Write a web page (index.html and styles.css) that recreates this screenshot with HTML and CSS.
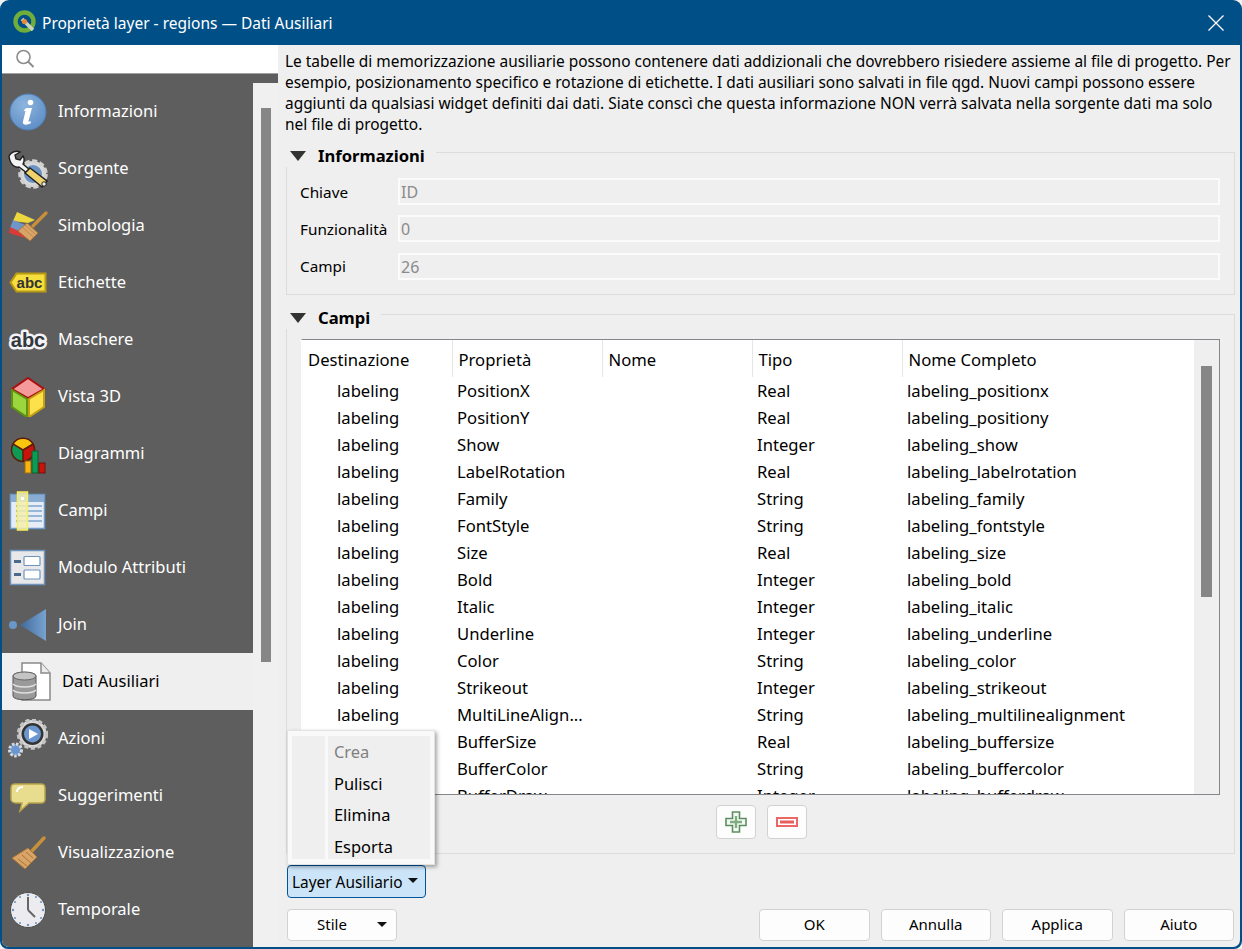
FILE: index.html
```html
<!DOCTYPE html>
<html lang="it">
<head>
<meta charset="utf-8">
<title>Proprietà layer - regions — Dati Ausiliari</title>
<link rel="stylesheet" href="styles.css">
</head>
<body>
<div class="window">
  <header class="titlebar">
    <svg class="logo" viewBox="0 0 26 26" width="26" height="26">
      <circle cx="12.5" cy="11.5" r="9" fill="none" stroke="#6fae3c" stroke-width="4.4"/>
      <path d="M10 9l11 11" stroke="#c9d4c0" stroke-width="3.6" fill="none"/>
      <circle cx="12.5" cy="11.5" r="2.6" fill="#e8893a"/>
    </svg>
    <span class="title">Proprietà layer - regions — Dati Ausiliari</span>
    <svg class="close" viewBox="0 0 16 16" width="16" height="16"><path d="M.5.5l15 15M15.500.5l-15 15" stroke="#fff" stroke-width="1.300" fill="none"/></svg>
  </header>
  <div class="content">
    <aside class="left">
      <div class="search">
        <svg viewBox="0 0 20 20" width="20" height="20"><circle cx="8.500" cy="8" r="6.500" fill="none" stroke="#8c8c8c" stroke-width="1.600"/><path d="M13 12.500l5.500 5.500" stroke="#8c8c8c" stroke-width="2"/></svg>
      </div>
      <div class="side-row">
        <nav class="side-list">
          <div class="item"><svg class="ico" viewBox="0 0 40 40"><defs><radialGradient id="gi" cx=".4" cy=".3" r=".8"><stop offset="0" stop-color="#8db4de"/><stop offset="1" stop-color="#5a8bc4"/></radialGradient></defs><circle cx="20" cy="20" r="18" fill="url(#gi)" stroke="#4f7fb8"/><circle cx="22.500" cy="10.500" r="2.800" fill="#fff"/><path d="M18 16h6l-3.500 13c-.2 1 .6 1 2.500 0l-.5 2.500c-4 2-8.500 1.500-7.500-2l2.500-10.500h-2z" fill="#fff"/></svg><span>Informazioni</span></div>
          <div class="item"><svg class="ico" viewBox="0 0 40 40"><circle cx="25" cy="25" r="13" fill="#d8d8d8" stroke="#d0d0d0" stroke-width="3.500" stroke-dasharray="5 2.500"/><circle cx="25" cy="25" r="9" fill="#6a93c4"/><path d="M1 7c2-4 7-6 11-4l-5 3 1 4 4 1 3-4c2 3 1 6 0 8l7 6-3 3-8-6c-4 1-9-2-10-11z" fill="#f4f4f4" stroke="#222" stroke-width="1.400"/><path d="M22 19l17 13-5 6-17-14z" fill="#eed36c" stroke="#222" stroke-width="1.500"/><circle cx="36" cy="35" r="2.200" fill="#eee" stroke="#222"/></svg><span>Sorgente</span></div>
          <div class="item"><svg class="ico" viewBox="0 0 40 40"><path d="M9 6l18 8-7 3-15-2z" fill="#ecd83e"/><path d="M5 14l15 6-5 7-13-5z" fill="#6f96c7"/><path d="M2 21l13 6 2 5-16-5z" fill="#d93a3a"/><path d="M38 7L25 20" stroke="#c98f3a" stroke-width="3.200" stroke-linecap="round"/><path d="M19 17l11 10-8 8-12-10z" fill="#d9a468" stroke="#a87434"/><path d="M14 21l11 10M17 19l10 9" stroke="#b88444" stroke-width=".8"/></svg><span>Simbologia</span></div>
          <div class="item"><svg class="ico" viewBox="0 0 40 40"><path d="M8.500 10.500h29v18h-29l-6-9z" fill="#f6de3c" stroke="#b89a14" stroke-width="2"/><text class="abc" x="21.500" y="24.500">abc</text></svg><span>Etichette</span></div>
          <div class="item"><svg class="ico" viewBox="0 0 40 40"><text class="abc2" x="20" y="26.500">abc</text></svg><span>Maschere</span></div>
          <div class="item"><svg class="ico" viewBox="0 0 40 40"><path d="M20 1l16 11-16 9-16-9z" fill="#f59a9a" stroke="#a80f0f" stroke-width="2"/><path d="M4 13l15 9v18l-15-10z" fill="#9bd63f" stroke="#5d9412" stroke-width="2"/><path d="M36 13l-15 9v18l15-10z" fill="#fce14a" stroke="#c4a012" stroke-width="2"/></svg><span>Vista 3D</span></div>
          <div class="item"><svg class="ico" viewBox="0 0 40 40"><circle cx="15" cy="16" r="11.500" fill="#0e9a52" stroke="#5c1c0c" stroke-width="1.500"/><path d="M15 16V27a11.500 11.500 0 0 0 10-17z" fill="#c8140a" stroke="#5c1c0c" stroke-width="1.500"/><path d="M15 16L5 10a11.500 11.500 0 0 1 20 0z" fill="#fbc70e" stroke="#5c1c0c" stroke-width="1.500"/><rect x="17" y="27" width="6" height="12" fill="#fbb40e" stroke="#9b6a10"/><rect x="24" y="17" width="6" height="22" fill="#0e9a52" stroke="#0a5f34"/><rect x="31" y="29" width="6" height="10" fill="#c8140a" stroke="#6c120a"/></svg><span>Diagrammi</span></div>
          <div class="item"><svg class="ico" viewBox="0 0 40 40"><rect x="2.500" y="3.500" width="34" height="34" fill="#e6edf6" stroke="#6e9ac8" stroke-width="1.500"/><rect x="3" y="4" width="33" height="7" fill="#88acd4"/><path d="M8 15h26M8 20h26M8 25h26M8 30h26" stroke="#7fa4cc" stroke-width="1.500"/><rect x="9.500" y="1" width="10" height="38" fill="#f4eeb0" fill-opacity=".85" stroke="#f6f05a" stroke-width="1.500"/><rect x="13" y="6" width="3" height="3" fill="#fff"/></svg><span>Campi</span></div>
          <div class="item"><svg class="ico" viewBox="0 0 40 40"><rect x="2.500" y="2.500" width="34" height="34" fill="#e8e8ea" stroke="#6e94bd" stroke-width="1.500"/><rect x="6" y="12" width="7" height="3" fill="#4a6a8c"/><rect x="6" y="25" width="7" height="3" fill="#4a6a8c"/><rect x="16" y="8.500" width="16" height="9" rx="1" fill="#fff" stroke="#6e94bd" stroke-width="1.200"/><rect x="16" y="22" width="16" height="9" rx="1" fill="#fff" stroke="#6e94bd" stroke-width="1.200"/></svg><span>Modulo Attributi</span></div>
          <div class="item"><svg class="ico" viewBox="0 0 40 40"><defs><linearGradient id="gj" x1="0" x2="1" y1="0" y2="0"><stop offset="0" stop-color="#3f6a9c"/><stop offset="1" stop-color="#78a2cf"/></linearGradient></defs><circle cx="5" cy="20" r="4" fill="#6a97c9"/><path d="M12 20l26-16v32z" fill="url(#gj)"/></svg><span>Join</span></div>
          <div class="item current"><svg class="ico" viewBox="0 0 40 40"><path d="M10 1h19l9 10v27H10z" fill="#fff" stroke="#8a8a8a" stroke-width="1.500"/><path d="M29 1v10h9" fill="#ececec" stroke="#8a8a8a" stroke-width="1.500"/><path d="M1 14c0-5 23-5 23 0v20c0 5-23 5-23 0z" fill="#9a9a9a" stroke="#555"/><ellipse cx="12.500" cy="14" rx="11.500" ry="4" fill="#c4c4c4" stroke="#666"/><path d="M1 22c4 4 19 4 23 0M1 28c4 4 19 4 23 0" stroke="#e0e0e0" stroke-width="1.500" fill="none"/></svg><span>Dati Ausiliari</span></div>
          <div class="item"><svg class="ico" viewBox="0 0 40 40"><circle cx="24.500" cy="15" r="14" fill="#d9d9d9" stroke="#c4c4c4" stroke-width="3.500" stroke-dasharray="4 2.500"/><circle cx="24.500" cy="15" r="11" fill="#333"/><circle cx="24.500" cy="15" r="8.500" fill="#6a97cf"/><path d="M21 10l9 5-9 5z" fill="#fff"/><circle cx="7.500" cy="31" r="6" fill="#6a97cf" stroke="#d9d9d9" stroke-width="3" stroke-dasharray="2.500 1.500"/></svg><span>Azioni</span></div>
          <div class="item"><svg class="ico" viewBox="0 0 40 40"><path d="M7 8h26c3 0 4 2 4 4v11c0 3-2 4-4 4H21l-9 8 2-8H8c-3 0-5-2-5-4V12c0-3 2-4 4-4z" fill="#e8dc8e" stroke="#b8a44a" stroke-width="1.500"/><path d="M9 16c0-3 2-5 6-5" stroke="#fff" stroke-width="2" fill="none"/></svg><span>Suggerimenti</span></div>
          <div class="item"><svg class="ico" viewBox="0 0 40 40"><path d="M36 5l-13 14" stroke="#c9903c" stroke-width="3.500" stroke-linecap="round"/><path d="M20 15l9 9-12 12-13-11z" fill="#d9a468" stroke="#a87434"/><path d="M10 26l9 7M14 22l9 8M18 19l7 6" stroke="#a87434"/></svg><span>Visualizzazione</span></div>
          <div class="item"><svg class="ico" viewBox="0 0 40 40"><circle cx="20" cy="20" r="17.500" fill="#ececf0" stroke="#4a4a4a" stroke-width="1"/><path d="M20 20V7" stroke="#666" stroke-width="2"/><path d="M20 20l7 7" stroke="#666" stroke-width="2"/><g fill="#6a92c4"><circle cx="20" cy="5" r="1.200"/><circle cx="20" cy="35" r="1.200"/><circle cx="5" cy="20" r="1.200"/><circle cx="35" cy="20" r="1.200"/><circle cx="28" cy="7" r="1"/><circle cx="33" cy="12" r="1"/><circle cx="33" cy="28" r="1"/><circle cx="28" cy="33" r="1"/><circle cx="12" cy="33" r="1"/><circle cx="7" cy="28" r="1"/><circle cx="7" cy="12" r="1"/><circle cx="12" cy="7" r="1"/></g></svg><span>Temporale</span></div>
        </nav>
        <div class="side-scroll"><div class="side-thumb"></div></div>
      </div>
    </aside>
    <main class="main">
      <p class="desc">Le tabelle di memorizzazione ausiliarie possono contenere dati addizionali che dovrebbero risiedere assieme al file di progetto. Per esempio, posizionamento specifico e rotazione di etichette. I dati ausiliari sono salvati in file qgd. Nuovi campi possono essere aggiunti da qualsiasi widget definiti dai dati. Siate conscì che questa informazione NON verrà salvata nella sorgente dati ma solo nel file di progetto.</p>

      <section class="group">
        <div class="group-head"><i class="tri"></i><h2>Informazioni</h2><div class="group-line"></div></div>
        <div class="group-body info">
          <label>Chiave</label><div class="field">ID</div>
          <label>Funzionalità</label><div class="field">0</div>
          <label>Campi</label><div class="field">26</div>
        </div>
      </section>

      <section class="group second">
        <div class="group-head"><i class="tri"></i><h2>Campi</h2><div class="group-line"></div></div>
        <div class="group-body fields">
          <div class="tbl">
            <div class="tbl-view">
              <table>
                <thead><tr><th>Destinazione</th><th>Proprietà</th><th>Nome</th><th>Tipo</th><th>Nome Completo</th></tr></thead>
                <tbody>
                  <tr><td>labeling</td><td>PositionX</td><td></td><td>Real</td><td>labeling_positionx</td></tr>
                  <tr><td>labeling</td><td>PositionY</td><td></td><td>Real</td><td>labeling_positiony</td></tr>
                  <tr><td>labeling</td><td>Show</td><td></td><td>Integer</td><td>labeling_show</td></tr>
                  <tr><td>labeling</td><td>LabelRotation</td><td></td><td>Real</td><td>labeling_labelrotation</td></tr>
                  <tr><td>labeling</td><td>Family</td><td></td><td>String</td><td>labeling_family</td></tr>
                  <tr><td>labeling</td><td>FontStyle</td><td></td><td>String</td><td>labeling_fontstyle</td></tr>
                  <tr><td>labeling</td><td>Size</td><td></td><td>Real</td><td>labeling_size</td></tr>
                  <tr><td>labeling</td><td>Bold</td><td></td><td>Integer</td><td>labeling_bold</td></tr>
                  <tr><td>labeling</td><td>Italic</td><td></td><td>Integer</td><td>labeling_italic</td></tr>
                  <tr><td>labeling</td><td>Underline</td><td></td><td>Integer</td><td>labeling_underline</td></tr>
                  <tr><td>labeling</td><td>Color</td><td></td><td>String</td><td>labeling_color</td></tr>
                  <tr><td>labeling</td><td>Strikeout</td><td></td><td>Integer</td><td>labeling_strikeout</td></tr>
                  <tr><td>labeling</td><td>MultiLineAlign...</td><td></td><td>String</td><td>labeling_multilinealignment</td></tr>
                  <tr><td>labeling</td><td>BufferSize</td><td></td><td>Real</td><td>labeling_buffersize</td></tr>
                  <tr><td>labeling</td><td>BufferColor</td><td></td><td>String</td><td>labeling_buffercolor</td></tr>
                  <tr><td>labeling</td><td>BufferDraw</td><td></td><td>Integer</td><td>labeling_bufferdraw</td></tr>
                </tbody>
              </table>
            </div>
            <div class="tbl-scroll"><div class="tbl-thumb"></div></div>
          </div>
          <div class="tool-row">
            <button class="tool"><svg viewBox="0 0 22 22" width="22" height="22"><path d="M7.500 1h7v6.500H21v7h-6.500V21h-7v-6.500H1v-7h6.500z" fill="#f4f8f4" stroke="#5c8f5f" stroke-width="1.600"/><path d="M11 5v12M5 11h12" stroke="#7fae82" stroke-width="2.400"/></svg></button>
            <button class="tool"><svg viewBox="0 0 22 10" width="22" height="10"><rect x="1" y="1" width="20" height="8" fill="#fff" stroke="#ec6666" stroke-width="2"/><rect x="4" y="3.500" width="14" height="3" fill="#e85c5c"/></svg></button>
          </div>
        </div>
      </section>

      <div class="aux-row">
        <div class="aux-wrap">
          <div class="menu">
            <div class="menu-gutter"></div>
            <ul class="menu-list">
              <li class="off">Crea</li>
              <li>Pulisci</li>
              <li>Elimina</li>
              <li>Esporta</li>
            </ul>
          </div>
          <button class="aux">Layer Ausiliario<i class="caret"></i></button>
        </div>
      </div>

      <footer class="foot">
        <button class="btn style-btn"><span>Stile</span><i class="caret wide"></i></button>
        <div class="foot-right">
          <button class="btn">OK</button>
          <button class="btn">Annulla</button>
          <button class="btn">Applica</button>
          <button class="btn">Aiuto</button>
        </div>
      </footer>
    </main>
  </div>
</div>
</body>
</html>
```
FILE: styles.css
```css
* { box-sizing: border-box; }
html, body { margin: 0; padding: 0; background: #f2f2f2; }
body { font-family: "Noto Sans", "Open Sans", sans-serif; font-size: 15px; color: #000; }

.window {
  width: 1242px; height: 949px; background: #014f87;
  border-radius: 9px 9px 8px 8px; display: flex; flex-direction: column; overflow: hidden;
}

.titlebar { height: 45px; flex: none; display: flex; align-items: center; padding: 0 18px 0 12px; color: #fff; }
.logo { flex: none; margin-right: 4px; }
.title { font-size: 15.500px; flex: 1; }
.close { flex: none; }

.content { flex: 1; display: flex; margin: 0 2px 2px; background: #efefef; border-radius: 0 0 7px 7px; overflow: hidden; min-height: 0; }

.left { width: 276px; flex: none; display: flex; flex-direction: column; }
.search { height: 29px; flex: none; background: #fff; border-bottom: 1px solid #a0a0a0; padding: 4px 0 0 13px; }
.search svg { display: block; }
.side-row { flex: 1; display: flex; background: #5e5e5e; min-height: 0; }
.side-list { width: 251px; flex: none; padding-top: 9px; }
.item { height: 57px; display: flex; align-items: center; color: #fff; font-size: 16.500px; padding-left: 6px; }
.item span { margin-top: -3px; }
.ico { width: 40px; height: 40px; flex: none; margin-right: 10px; }
.abc { font: bold 15px "Liberation Sans", sans-serif; fill: #333; text-anchor: middle; }
.abc2 { font: bold 20px "Liberation Sans", sans-serif; fill: #33373e; stroke: #f4f4f8; stroke-width: 5px; stroke-linejoin: round; paint-order: stroke; text-anchor: middle; }
.item.current { background: #efefef; color: #000; padding-left: 10px; }
.side-scroll { flex: 1; margin-top: 9px; background: #f0f0f0; padding: 25px 0 0 8px; }
.side-thumb { width: 10px; height: 554px; background: #868686; }

.main { flex: 1; min-width: 0; padding: 6px 5px 6px 7px; display: flex; flex-direction: column; }
.desc { margin: 0 0 10px; line-height: 21px; font-size: 15.430px; height: 84px; }

.group { margin-left: 1px; }
.group-head { height: 22px; display: flex; align-items: center; }
.tri { width: 0; height: 0; margin: 0 12px 0 4px; border-left: 8px solid transparent; border-right: 8px solid transparent; border-top: 10px solid #333; flex: none; }
.group h2 { margin: 0 11px 0 0; font-size: 16.600px; font-weight: 700; line-height: 20px; }
.group-line { flex: 1; align-self: stretch; margin-top: 7px; border-top: 1px solid #dcdcdc; border-right: 1px solid #dcdcdc; }
.group-body { border: 1px solid #dcdcdc; border-top: 0; }
.second { margin-top: 12px; }

.info { display: grid; grid-template-columns: 98px 1fr; row-gap: 10px; padding: 11px 14px 14px 13px; align-items: center; height: 128px; }
.info label { font-size: 15.300px; }
.field { height: 27px; border: 2px solid #fbfbfb; background: #efefef; color: #8a8a8a; padding-left: 1px; line-height: 24px; font-size: 16px; }

.fields { padding: 10px 14px 14px 14px; height: 525px; }
.tbl { height: 456px; display: flex; border: 1px solid #85858c; border-left-color: #fff; }
.tbl-view { width: 892px; flex: none; background: #fff; overflow: hidden; }
.tbl-view table { border-collapse: collapse; table-layout: fixed; width: 892px; font-size: 16.650px; }
th { font-weight: 400; text-align: left; height: 37px; padding: 1px 0 0 6px; width: 150px; border-right: 1px solid #e6e6e6; overflow: hidden; }
th:last-child { width: 292px; }
td { height: 27px; padding: 0 0 1px 5px; white-space: nowrap; overflow: hidden; }
td:first-child { padding-left: 35px; }
.tbl-scroll { flex: 1; background: #efefef; padding: 26px 0 0 7px; }
.tbl-thumb { width: 11px; height: 231px; background: #868686; }

.tool-row { display: flex; justify-content: center; gap: 11px; margin: 10px 0 0 2px; height: 34px; }
.tool { width: 40px; height: 34px; padding: 0; display: flex; align-items: center; justify-content: center; background: #fdfdfd; border: 1px solid #d2d2d2; border-radius: 4px; }

.aux-row { margin-top: 11px; padding-left: 2px; }
.aux-wrap { position: relative; width: 139px; }
.aux { width: 139px; height: 33px; padding: 1px 0 0 4px; display: flex; align-items: center; background: #cce4f7; border: 1px solid #005499; border-radius: 4px; font: inherit; font-size: 15.400px; color: #000; }
.caret { width: 0; height: 0; margin-left: 5px; margin-bottom: 3px; border-left: 5px solid transparent; border-right: 5px solid transparent; border-top: 5px solid #111; }
.caret.wide { position: absolute; right: 9px; top: 12px; margin: 0; }

.menu {
  position: absolute; left: 0; bottom: 33px; width: 148px; height: 135px;
  padding: 5px 4px; display: flex; gap: 3px; background: #f9f9f9; border: 1px solid #e2e2e2;
  box-shadow: 2px 2px 4px rgba(0,0,0,.35);
}
.menu-gutter { width: 33px; background: #efefef; }
.menu-list { flex: 1; margin: 0; padding: 0; list-style: none; background: #efefef; }
.menu-list li { height: 31.500px; line-height: 31px; padding-left: 6px; font-size: 16.400px; }
.menu-list .off { color: #808080; }

.foot { margin-top: 11px; padding: 0 1px 0 2px; display: flex; justify-content: space-between; }
.foot-right { display: flex; gap: 11px; }
.btn { position: relative; width: 110.500px; height: 32px; padding: 0 0 2px; background: #fdfdfd; border: 1px solid #d2d2d2; border-radius: 4px; font: inherit; font-size: 15px; color: #000; }
.style-btn { width: 110px; text-align: left; padding-left: 29px; }
```
